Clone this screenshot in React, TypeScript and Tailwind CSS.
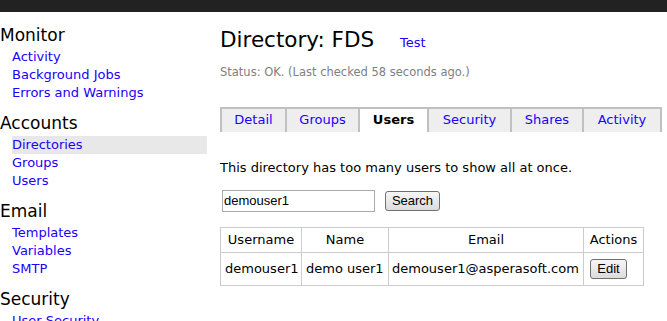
const nav = [
    { title: 'Monitor', links: ['Activity', 'Background Jobs', 'Errors and Warnings'] },
    { title: 'Accounts', links: ['Directories', 'Groups', 'Users'] },
    { title: 'Email', links: ['Templates', 'Variables', 'SMTP'] },
    { title: 'Security', links: ['User Security'] },
];

const tabs = [
    { label: 'Detail', w: 'w-[65px]' },
    { label: 'Groups', w: 'w-[73px]' },
    { label: 'Users', w: 'w-[69px]', active: true },
    { label: 'Security', w: 'w-[83px]' },
    { label: 'Shares', w: 'w-[72px]' },
    { label: 'Activity', w: 'w-[80px] border-r-2' },
];

const btn =
    "rounded-[3px] border border-[#707070] bg-gradient-to-b from-[#f6f6f6] to-[#dcdcdc] font-['Liberation_Sans',Arial,sans-serif] text-[13px] leading-none text-black";

export default function App() {
    return (
        <div className="h-[321px] w-[667px] overflow-hidden bg-white font-['DejaVu_Sans',Verdana,sans-serif] text-black">
            {/* Top bar */}
            <div className="h-[12px] bg-[#222222]" />

            <div className="flex">
                {/* Sidebar */}
                <div className="flex w-[207px] shrink-0 flex-col gap-[11px] pt-[13px]">
                    {nav.map((section) => (
                        <div key={section.title}>
                            <h3 className="text-[17px] leading-[20px]">{section.title}</h3>
                            <ul className="mt-[3px]">
                                {section.links.map((link) => (
                                    <li
                                        key={link}
                                        className={
                                            'pl-[12px] text-[13px] leading-[18px] text-[#2000ff] ' +
                                            (link === 'Directories' ? 'ml-[12px] !pl-0 bg-[#e8e8e8]' : '')
                                        }
                                    >
                                        {link}
                                    </li>
                                ))}
                            </ul>
                        </div>
                    ))}
                </div>

                {/* Main */}
                <div className="ml-[13px] flex flex-col pt-[16px]">
                    <div className="flex items-baseline">
                        <h1 className="w-[180px] text-[21.5px] leading-[24px]">Directory: FDS</h1>
                        <a className="text-[13px] text-[#2000ff]">Test</a>
                    </div>
                    <p className="mt-[12px] text-[11.5px] leading-[14px] text-[#808080]">
                        Status: OK. (Last checked 58 seconds ago.)
                    </p>

                    {/* Tabs */}
                    <div className="mt-[28px] flex">
                        {tabs.map((tab) => (
                            <div
                                key={tab.label}
                                className={
                                    'h-[25px] border-t-2 border-l-2 border-[#c0c0c0] text-center text-[13px] leading-[22px] ' +
                                    tab.w +
                                    (tab.active ? ' bg-white font-bold text-black' : ' bg-[#eeeeee] text-[#2000ff]')
                                }
                            >
                                {tab.label}
                            </div>
                        ))}
                    </div>

                    <p className="mt-[27px] text-[13px] leading-[18px]">
                        This directory has too many users to show all at once.
                    </p>

                    {/* Search */}
                    <div className="mt-[13px] flex items-start">
                        <input
                            defaultValue="demouser1"
                            className="ml-[2px] h-[22px] w-[153px] border border-[#a9a9a9] px-[1px] font-['Liberation_Sans',Arial,sans-serif] text-[13px] outline-none"
                        />
                        <button className={'mt-[1px] ml-[10px] h-[20px] w-[55px] ' + btn}>Search</button>
                    </div>

                    {/* Results */}
                    <table className="mt-[15px] w-[423px] table-fixed border-collapse text-[13px]">
                        <colgroup>
                            <col className="w-[81px]" />
                            <col className="w-[87px]" />
                            <col className="w-[195px]" />
                            <col className="w-[60px]" />
                        </colgroup>
                        <thead>
                            <tr className="h-[25px]">
                                {['Username', 'Name', 'Email', 'Actions'].map((h) => (
                                    <th key={h} className="border border-[#cccccc] p-0 text-center font-normal">
                                        {h}
                                    </th>
                                ))}
                            </tr>
                        </thead>
                        <tbody>
                            <tr className="h-[33px]">
                                <td className="border border-[#cccccc] px-[4px] whitespace-nowrap">demouser1</td>
                                <td className="border border-[#cccccc] px-[4px] whitespace-nowrap">demo user1</td>
                                <td className="border border-[#cccccc] px-[3px] whitespace-nowrap">demouser1@asperasoft.com</td>
                                <td className="border border-[#cccccc] pl-[6px]">
                                    <button className={'h-[20px] w-[37px] ' + btn}>Edit</button>
                                </td>
                            </tr>
                        </tbody>
                    </table>
                </div>
            </div>
        </div>
    );
}
